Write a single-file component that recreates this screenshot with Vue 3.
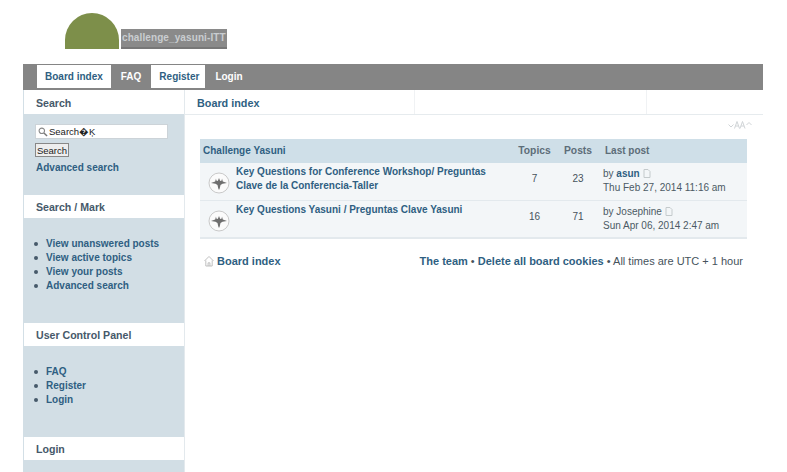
<template>
  <div class="page">
    <header class="logo">
      <span class="sun"></span>
      <span class="site">challenge_yasuni-ITT</span>
    </header>
    <nav class="tabs">
      <a v-for="t in tabs" :key="t.label" class="tab" :class="{ on: t.on }">{{ t.label }}</a>
    </nav>
    <div class="cols">
      <aside class="side">
        <h3 class="side-title first">Search</h3>
        <div class="panel search-panel">
          <div class="field">
            <svg class="lens" width="10" height="10" viewBox="0 0 11 11"><circle cx="4.200" cy="4.200" r="3" fill="#fff" stroke="#888" stroke-width="1.200"/><path d="M6.500 6.500 10 10" stroke="#777" stroke-width="1.600"/></svg>
            <span>Search�Ķ</span>
          </div>
          <button class="btn" type="button">Search</button>
          <a class="adv">Advanced search</a>
        </div>
        <template v-for="b in blocks" :key="b.title">
          <h3 class="side-title">{{ b.title }}</h3>
          <div class="panel" :class="b.cls">
            <ul>
              <li v-for="l in b.links" :key="l">{{ l }}</li>
            </ul>
          </div>
        </template>
        <h3 class="side-title">Login</h3>
        <div class="panel last"></div>
      </aside>
      <main class="main">
        <div class="crumb">
          <div class="crumb-a">Board index</div>
          <div class="crumb-b"></div>
          <div class="crumb-c"></div>
        </div>
        <div class="size">
          <svg width="24" height="10" viewBox="0 0 24 10" fill="none" stroke="#d0d4d7" stroke-width="1"><path d="M.5 4.500l2.500 2.500 2.500-2.500M6.500 8.500l2.500-7 2.500 7M7.500 6h3M12 8.500l2.500-7 2.500 7M13 6h3M18.500 5l2.500-2.500 2.500 2.500"/></svg>
        </div>
        <section class="forum">
          <div class="row head">
            <div class="c-title">Challenge Yasuni</div>
            <div class="c-num">Topics</div>
            <div class="c-num2">Posts</div>
            <div class="c-last">Last post</div>
          </div>
          <div v-for="r in rows" :key="r.topics" class="row item">
            <div class="c-icon">
              <svg width="22" height="22" viewBox="0 0 22 22"><circle cx="11" cy="11" r="10" fill="#fbfbfb" stroke="#c9c9c9" stroke-width="1"/><path d="M11 6l1.200 3 1.500-.6.300-2 .8 3 4.200 1.600-4.500.7-2 1.300-.8 3.500-.7 1.500-.7-1.500-.8-3.500-2-1.300-4.500-.7 4.200-1.600.8-3 .3 2 1.500.6z" fill="#6f6f6f"/></svg>
            </div>
            <div class="c-topic">{{ r.title }}</div>
            <div class="c-num val">{{ r.topics }}</div>
            <div class="c-num2 val">{{ r.posts }}</div>
            <div class="c-last info">
              <div class="by">by <b v-if="r.link">{{ r.by }}</b><span v-else>{{ r.by }}</span>
                <svg class="doc" width="8" height="9" viewBox="0 0 8 9" fill="none" stroke="#c4cacc"><path d="M1 .5h4l2 2v6H1z"/></svg>
              </div>
              <div>{{ r.date }}</div>
            </div>
          </div>
        </section>
        <footer class="foot">
          <div class="home">
            <svg width="10" height="12" viewBox="0 0 11 12" fill="none" stroke="#b9b9b9"><path d="M.5 6 5.500 1l5 5M2 5.500v6h7v-6M4.500 11.500V8h2v3.500"/></svg>
            <a>Board index</a>
          </div>
          <div class="foot-r"><a>The team</a> • <a>Delete all board cookies</a> <span class="sep">•</span> All times are UTC + 1 hour</div>
        </footer>
      </main>
    </div>
  </div>
</template>

<script setup>
const tabs = [
  { label: 'Board index', on: true },
  { label: 'FAQ' },
  { label: 'Register', on: true },
  { label: 'Login' }
]
const blocks = [
  { title: 'Search / Mark', cls: 'mark', links: ['View unanswered posts', 'View active topics', 'View your posts', 'Advanced search'] },
  { title: 'User Control Panel', cls: 'ucp', links: ['FAQ', 'Register', 'Login'] }
]
const rows = [
  { title: 'Key Questions for Conference Workshop/ Preguntas Clave de la Conferencia-Taller', topics: 7, posts: 23, by: 'asun', link: true, date: 'Thu Feb 27, 2014 11:16 am' },
  { title: 'Key Questions Yasuni / Preguntas Clave Yasuni', topics: 16, posts: 71, by: 'Josephine', link: false, date: 'Sun Apr 06, 2014 2:47 am' }
]
</script>

<style>
html, body { margin: 0; background: #fff; overflow: hidden; }
</style>

<style scoped>
.page {
  width: 787px;
  height: 472px;
  overflow: hidden;
  font-family: "Liberation Sans", Arial, sans-serif;
  font-size: 10px;
  color: #4a5a66;
  box-sizing: border-box;
  padding: 0 24px 0 23px;
}
.logo { height: 64px; display: flex; align-items: flex-end; padding: 13px 0 15px 42px; box-sizing: border-box; gap: 2px; }
.sun {
  width: 54px; height: 36px;
  background: #7d8f4a;
  border-radius: 27px 27px 0 0;
}
.site {
  width: 106px; height: 20px;
  background: #8a8a8a;
  color: #c9cdd0;
  font-weight: bold;
  font-size: 10px;
  letter-spacing: .1px;
  line-height: 18px;
  padding-left: 1px;
  box-sizing: border-box;
  border-bottom: 2px solid #777;
  white-space: nowrap;
}
.tabs {
  height: 26px;
  background: #858585;
  display: flex;
  padding-left: 14px;
  box-sizing: border-box;
}
.tab {
  font-weight: bold;
  font-size: 10px;
  color: #fff;
  padding: 0 8px;
  line-height: 23px;
  height: 23px;
  margin-top: 1px;
}
.tab:nth-child(2) { padding: 0 10px; }
.tab:nth-child(3) { padding: 0 6px 0 8px; }
.tab:nth-child(4) { padding: 0 10px; }
.tab.on { background: #fff; color: #2f5f82; }
.cols { display: flex; }
.side { width: 161px; flex: none; border-right: 1px solid #e3e9ed; }
.side-title {
  margin: 0;
  height: 23px;
  line-height: 25px;
  padding-left: 12px;
  font-size: 10.600px;
  font-weight: bold;
  color: #46596a;
  background: #fff;
  border-left: 1px solid #d3dfe6;
}
.side-title.first { height: 24px; line-height: 26px; }
.panel { background: #d2dee5; padding: 0 12px; box-sizing: border-box; }
.search-panel { height: 81px; padding-top: 10px; }
.mark { height: 105px; }
.ucp { height: 91px; }
.last { height: 30px; }
.field {
  width: 133px; height: 15px;
  background: #fff;
  border: 1px solid #ccd3d8;
  box-sizing: border-box;
  display: flex;
  align-items: center;
  gap: 1px;
  font-size: 9.500px;
  color: #222;
  padding-left: 2px;
}
.btn {
  display: block;
  margin: 4px 0 0;
  width: 34px; height: 14px;
  padding: 0;
  border: 1px solid #888;
  background: #eeeeee;
  font: 9.500px "Liberation Sans", Arial, sans-serif;
  color: #222;
}
.adv { display: block; margin-top: 5px; font-weight: bold; font-size: 10px; color: #2f5f82; padding-left: 1px; }
ul { list-style: none; margin: 0 0 0 -1px; padding: 19px 0 0; }
li { display: flex; align-items: center; gap: 8px; font-weight: bold; font-size: 10px; line-height: 14px; color: #2f5f82; }
li::before { content: ""; width: 4px; height: 4px; border-radius: 50%; background: #46596a; flex: none; }
.main { flex: 1; min-width: 0; }
.crumb { display: flex; height: 25px; border-bottom: 1px solid #e6ebee; box-sizing: border-box; }
.crumb-a { width: 230px; padding-left: 12px; box-sizing: border-box; line-height: 26px; font-weight: bold; font-size: 10.800px; color: #2f5f82; border-right: 1px solid #f0f2f4; }
.crumb-b { width: 231px; border-right: 1px solid #f0f2f4; }
.crumb-c { flex: 1; }
.size { height: 24px; display: flex; justify-content: flex-end; align-items: center; padding: 0 11px 5px 0; box-sizing: border-box; }
.forum { margin: 0 16px 0 15px; border-bottom: 1px solid #e3e9ed; }
.row { display: flex; }
.head {
  height: 24px; line-height: 24px;
  background: #cfdfe8;
  font-weight: bold;
  font-size: 10.300px;
  color: #5d6d78;
}
.head .c-title { width: 313px; box-sizing: border-box; padding-left: 3px; color: #2f5f82; font-size: 10px; }
.c-num { width: 43px; text-align: center; }
.c-num2 { width: 44px; text-align: center; }
.c-last { flex: 1; padding-left: 3px; }
.head .c-last { padding-left: 5px; font-size: 10px; }
.item { background: #f3f6f8; border-bottom: 1px solid #e3e9ed; box-sizing: border-box; height: 37.500px; font-size: 10px; }
.c-icon { width: 36px; flex: none; padding: 9px 0 0 8px; box-sizing: border-box; }
.c-topic { width: 277px; box-sizing: border-box; padding: 2px 15px 0 0; font-weight: bold; color: #2f5f82; line-height: 14px; font-size: 10px; }
.val { line-height: 31px; color: #46535c; }
.info { line-height: 14px; padding-top: 4px; color: #4c5a64; }
.by b { color: #2f5f82; }
.doc { margin-left: 3px; vertical-align: -1px; }
.foot { display: flex; justify-content: space-between; margin: 15px 20px 0 19px; font-size: 11px; color: #46535c; align-items: center; line-height: 14px; }
.home { display: flex; align-items: center; gap: 3px; }
.foot a { font-weight: bold; color: #2f5f82; }
</style>
